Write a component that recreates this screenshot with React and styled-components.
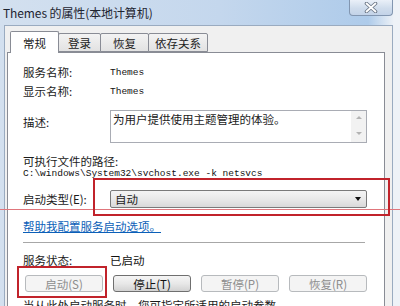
import React from 'react';
import styled, { createGlobalStyle } from 'styled-components';

const GlobalStyle = createGlobalStyle`
  html, body {
    margin: 0;
    padding: 0;
    overflow: hidden;
    background: #f3f5f8;
  }
  * {
    box-sizing: border-box;
  }
`;

const cjk = `"Noto Sans CJK SC", "Noto Sans", sans-serif`;
const mono = `"Liberation Mono", "DejaVu Sans Mono", monospace`;

const Window = styled.div`
  position: relative;
  width: 400px;
  height: 306px;
  overflow: hidden;
  display: flex;
  flex-direction: column;
  background: linear-gradient(90deg, #d3e0ef 0%, #c4d7ed 55%, #aecbea 92%, #eef2f7 98.5%);
  font-family: ${cjk};
  color: #1b1b1b;
`;

const TitleBar = styled.div`
  height: 25px;
  flex: none;
  display: flex;
  align-items: flex-start;
  justify-content: space-between;
  padding-left: 3px;
  padding-right: 7px;
`;

const Title = styled.div`
  font-size: 12px;
  line-height: 25px;
  color: #1e2430;
  letter-spacing: -0.1px;
`;

const CloseButton = styled.div`
  width: 44px;
  height: 16px;
  display: flex;
  align-items: center;
  justify-content: center;
  border: 1px solid #8296b0;
  border-top: none;
  border-radius: 0 0 4px 4px;
  background: linear-gradient(#eaf0f8, #cfdcec 55%, #c3d3e8);
`;

const Body = styled.div`
  flex: 1;
  margin: 0 7px 0 4px;
  background: #f0f0f0;
  border: 1px solid #9aabc0;
  border-bottom: none;
  padding: 5px 7px 0 2px;
  display: flex;
  flex-direction: column;
`;

const TabRow = styled.div`
  display: flex;
  align-items: flex-end;
  height: 21px;
  padding-left: 3px;
  position: relative;
  z-index: 1;
`;

const Tab = styled.div`
  width: ${p => p.$w}px;
  height: ${p => (p.$active ? 22 : 19)}px;
  margin-bottom: ${p => (p.$active ? -1 : 0)}px;
  margin-left: -1px;
  display: flex;
  align-items: center;
  justify-content: center;
  font-size: 11.5px;
  border: 1px solid #898c95;
  border-bottom: ${p => (p.$active ? 'none' : '1px solid #898c95')};
  border-radius: 2px 2px 0 0;
  background: ${p => (p.$active ? '#ffffff' : 'linear-gradient(#f3f3f3, #e2e2e2)')};
  &:first-child {
    margin-left: 0;
  }
`;

const Panel = styled.div`
  flex: 1;
  background: #ffffff;
  border: 1px solid #898c95;
  border-bottom: none;
  padding: 11px 17px 0 15px;
  display: flex;
  flex-direction: column;
`;

const Row = styled.div`
  display: grid;
  grid-template-columns: 87px 1fr;
  align-items: ${p => p.$align || 'center'};
  margin-top: ${p => p.$mt || 0}px;
  min-height: 17px;
`;

const Label = styled.div`
  font-size: 11.5px;
  line-height: 17px;
  padding-top: ${p => p.$pt || 0}px;
`;

const Value = styled.div`
  font-family: ${p => (p.$mono ? mono : cjk)};
  font-size: ${p => (p.$mono ? '9.5px' : '11.5px')};
  line-height: 17px;
  color: #111;
`;

const BlockLabel = styled.div`
  font-size: 11.5px;
  line-height: 15px;
  margin-top: 11px;
`;

const PathLine = styled.div`
  font-family: ${mono};
  font-size: 9.5px;
  line-height: 10px;
  color: #111;
  white-space: nowrap;
`;

const TextArea = styled.div`
  height: 33px;
  border: 1px solid #a9acb4;
  display: flex;
  justify-content: space-between;
`;

const AreaText = styled.div`
  font-size: 11.5px;
  line-height: 15px;
  padding: 1px 0 0 2px;
`;

const ScrollTrack = styled.div`
  width: 15px;
  background: #f2f2f2;
  display: flex;
  flex-direction: column;
  align-items: center;
  justify-content: space-between;
  padding: 5px 0 7px;
`;

const Arrow = styled.div`
  width: 0;
  height: 0;
  border-left: 3px solid transparent;
  border-right: 3px solid transparent;
  ${p => (p.$up ? 'border-bottom: 3px solid #b3b3b3;' : 'border-top: 3px solid #b3b3b3;')}
`;

const Select = styled.div`
  height: 18px;
  border: 1px solid #7a7a7a;
  border-radius: 2px;
  background: linear-gradient(#f4f4f4, #e9e9e9 50%, #d9d9d9);
  display: flex;
  align-items: center;
  justify-content: space-between;
  padding: 0 5px 0 4px;
  font-size: 11.5px;
`;

const SelectArrow = styled.div`
  width: 0;
  height: 0;
  border-left: 3.5px solid transparent;
  border-right: 3.5px solid transparent;
  border-top: 4px solid #111;
`;

const HelpLink = styled.a`
  display: block;
  margin-top: 10px;
  font-size: 11.5px;
  line-height: 16px;
  color: #0b5fb8;
  text-decoration: underline;
`;

const Separator = styled.div`
  height: 1px;
  background: #a7a7a7;
  margin: 8px 2px 0 0;
`;

const ButtonRow = styled.div`
  display: flex;
  gap: 10px;
  margin-top: 6px;
  padding-left: 2px;
`;

const Button = styled.div`
  width: 78px;
  height: 17px;
  display: flex;
  align-items: center;
  justify-content: center;
  border-radius: 3px;
  font-size: 11.5px;
  border: 1px solid ${p => (p.$disabled ? '#b7babd' : '#6f6f6f')};
  color: ${p => (p.$disabled ? '#8d8d8d' : '#111')};
  background: ${p => (p.$disabled ? '#f4f4f4' : 'linear-gradient(#f5f5f5, #e8e8e8 50%, #d2d2d2)')};
`;

const Hint = styled.div`
  margin-top: 5px;
  font-size: 11.5px;
  line-height: 16px;
  white-space: nowrap;
`;

const Mark = styled.div`
  position: absolute;
  left: ${p => p.$x}px;
  top: ${p => p.$y}px;
  width: ${p => p.$w}px;
  height: ${p => p.$h}px;
  border: 2px solid #c1232b;
  pointer-events: none;
`;

const MarkLine = styled.div`
  position: absolute;
  left: 0;
  top: 209px;
  width: 400px;
  height: 1px;
  background: #e0767c;
`;

const CloseIcon = () => (
  <svg width="14" height="11" viewBox="0 0 14 11">
    <path d="M2.5 1.5 L11.5 9.5 M11.5 1.5 L2.5 9.5" stroke="#6b7686" strokeWidth="3.6" strokeLinecap="round" />
    <path d="M2.5 1.5 L11.5 9.5 M11.5 1.5 L2.5 9.5" stroke="#ffffff" strokeWidth="1.8" strokeLinecap="round" />
  </svg>
);

const tabs = [
  { name: '常规', w: 49, active: true },
  { name: '登录', w: 43 },
  { name: '恢复', w: 49 },
  { name: '依存关系', w: 60 },
];

const buttons = [
  { name: '启动(S)', disabled: true },
  { name: '停止(T)' },
  { name: '暂停(P)', disabled: true },
  { name: '恢复(R)', disabled: true },
];

const App = () => (
  <>
    <GlobalStyle />
    <Window>
      <TitleBar>
        <Title>Themes 的属性(本地计算机)</Title>
        <CloseButton>
          <CloseIcon />
        </CloseButton>
      </TitleBar>
      <Body>
        <TabRow>
          {tabs.map(t => (
            <Tab key={t.name} $w={t.w} $active={t.active}>
              {t.name}
            </Tab>
          ))}
        </TabRow>
        <Panel>
          <Row>
            <Label>服务名称:</Label>
            <Value $mono>Themes</Value>
          </Row>
          <Row $mt={2}>
            <Label>显示名称:</Label>
            <Value $mono>Themes</Value>
          </Row>
          <Row $mt={10} $align="start">
            <Label $pt={4}>描述:</Label>
            <TextArea>
              <AreaText>为用户提供使用主题管理的体验。</AreaText>
              <ScrollTrack>
                <Arrow $up />
                <Arrow />
              </ScrollTrack>
            </TextArea>
          </Row>
          <BlockLabel>可执行文件的路径:</BlockLabel>
          <PathLine>C:\windows\System32\svchost.exe -k netsvcs</PathLine>
          <Row $mt={11}>
            <Label>启动类型(E):</Label>
            <Select>
              <span>自动</span>
              <SelectArrow />
            </Select>
          </Row>
          <HelpLink>帮助我配置服务启动选项。</HelpLink>
          <Separator />
          <Row $mt={9}>
            <Label>服务状态:</Label>
            <Value>已启动</Value>
          </Row>
          <ButtonRow>
            {buttons.map(b => (
              <Button key={b.name} $disabled={b.disabled}>
                {b.name}
              </Button>
            ))}
          </ButtonRow>
          <Hint>当从此处启动服务时，您可指定所适用的启动参数。</Hint>
        </Panel>
      </Body>
      <MarkLine />
      <Mark $x={93} $y={178} $w={297} $h={38} />
      <Mark $x={17} $y={266} $w={90} $h={32} />
    </Window>
  </>
);

export default App;
